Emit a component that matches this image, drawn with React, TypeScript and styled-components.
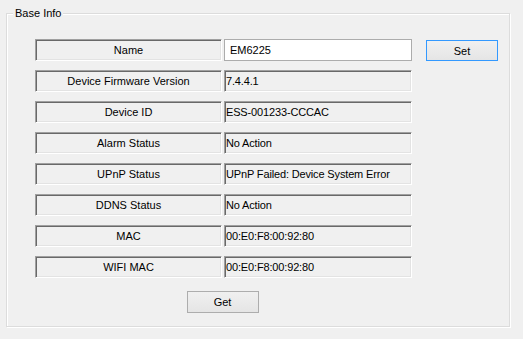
import React from "react";
import styled, { createGlobalStyle } from "styled-components";

const Global = createGlobalStyle`
  html, body { margin: 0; padding: 0; background: #f0f0f0; }
  body { font-family: "Liberation Sans", Arial, sans-serif; font-size: 11px; color: #000; }
`;

const Page = styled.div`
  width: 523px;
  height: 339px;
  padding: 13px 0 0 6px;
  box-sizing: border-box;
`;

const Group = styled.div`
  position: relative;
  width: 504px;
  height: 314px;
  box-sizing: border-box;
  border: 1px solid #dcdcdc;
  box-shadow: inset 1px 1px 0 #ffffff, 1px 1px 0 #ffffff;
  padding: 25px 0 0 28px;
  display: flex;
  flex-direction: column;
`;

const Caption = styled.span`
  position: absolute;
  left: 6px;
  top: -8px;
  padding: 0 2px;
  background: #f0f0f0;
  line-height: 14px;
  font-size: 11px;
`;

const Rows = styled.div`
  display: flex;
  flex-direction: column;
  gap: 9px;
`;

const Row = styled.div`
  display: flex;
  align-items: flex-start;
  height: 22px;
`;

const Sunken = styled.div`
  height: 22px;
  box-sizing: border-box;
  border-style: solid;
  border-width: 1px;
  border-color: #a0a0a0 #ffffff #ffffff #a0a0a0;
  box-shadow: inset 1px 1px 0 #696969, inset -1px -1px 0 #e3e3e3;
  display: flex;
  align-items: center;
  white-space: nowrap;
  overflow: hidden;
`;

const Label = styled(Sunken)`
  width: 187px;
  justify-content: center;
`;

const Value = styled(Sunken)`
  width: 188px;
  margin-left: 2px;
  padding-left: 1px;
  letter-spacing: -0.15px;
`;

const Input = styled.div`
  width: 188px;
  height: 22px;
  margin-left: 2px;
  box-sizing: border-box;
  border: 1px solid #acacac;
  background: #ffffff;
  display: flex;
  align-items: center;
  padding-left: 5px;
`;

const Button = styled.div<{ $focused?: boolean }>`
  width: 72px;
  height: 22px;
  box-sizing: border-box;
  border: 1px solid ${(p) => (p.$focused ? "#3399ff" : "#adadad")};
  background: linear-gradient(#f0f0f0, #e5e5e5);
  display: flex;
  align-items: center;
  justify-content: center;
`;

const SetButton = styled(Button)`
  margin: 1px 0 0 14px;
  height: 21px;
`;

const Footer = styled.div`
  width: 375px;
  display: flex;
  justify-content: center;
  margin-top: 13px;
`;

const rows: [string, string][] = [
  ["Device Firmware Version", "7.4.4.1"],
  ["Device ID", "ESS-001233-CCCAC"],
  ["Alarm Status", "No Action"],
  ["UPnP Status", "UPnP Failed: Device System Error"],
  ["DDNS Status", "No Action"],
  ["MAC", "00:E0:F8:00:92:80"],
  ["WIFI MAC", "00:E0:F8:00:92:80"],
];

export default function App() {
  return (
    <Page>
      <Global />
      <Group>
        <Caption>Base Info</Caption>
        <Rows>
          <Row>
            <Label>Name</Label>
            <Input>EM6225</Input>
            <SetButton $focused>Set</SetButton>
          </Row>
          {rows.map(([l, v]) => (
            <Row key={l}>
              <Label>{l}</Label>
              <Value>{v}</Value>
            </Row>
          ))}
        </Rows>
        <Footer>
          <Button>Get</Button>
        </Footer>
      </Group>
    </Page>
  );
}
